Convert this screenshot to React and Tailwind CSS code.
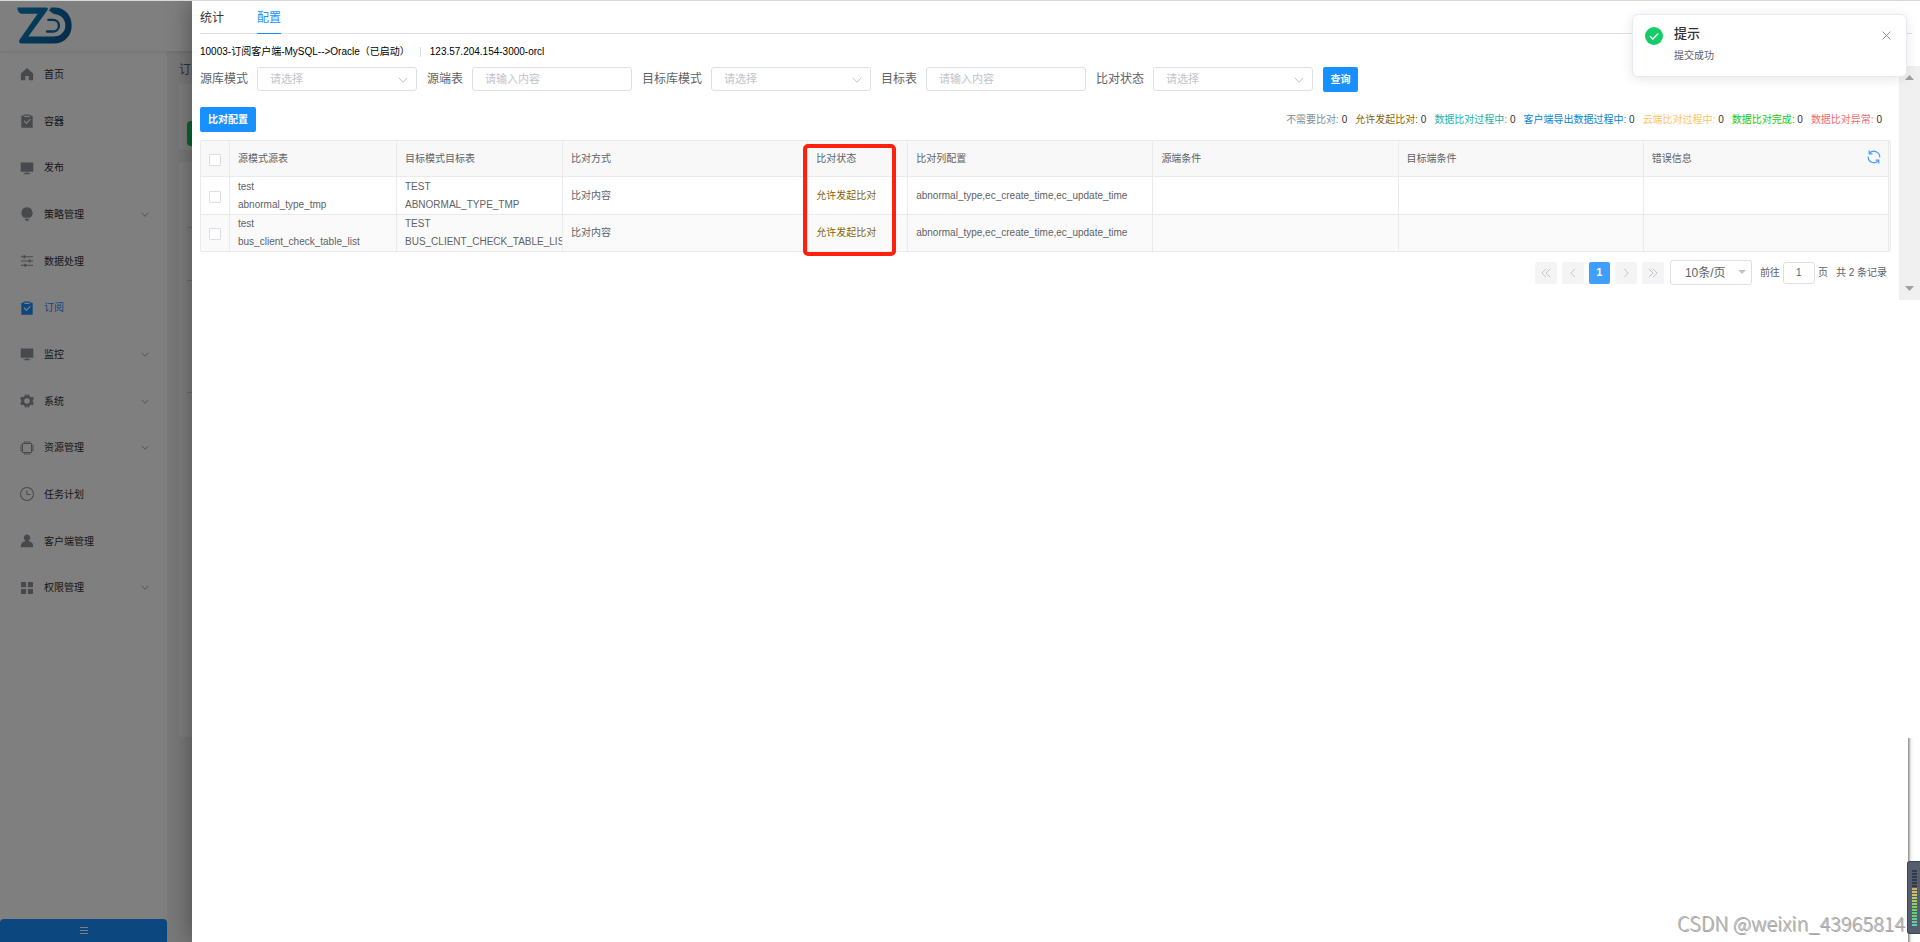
import React from "react";

const iconPaths = {
  home: <path d="M8 1.2 1 7.4V15h5v-4.6h4V15h5V7.4Z" />,
  claim: (
    <path
      fillRule="evenodd"
      d="M1.5 2H4V.8h1.2V2h5.6V.8H12V2h2.5v13.6h-13ZM5 .6h6v2.8H5ZM4 8l3.4 3.6 5-5.2-1-1-4 4.2L5 7Z"
    />
  ),
  platform: <path d="M.8 1.6h14.4v10.6H.8Zm5.4 11.6h3.6v.8h2v1.2H4.2V14h2Z" />,
  bulb: <path d="M8 .4a6.4 6.4 0 0 1 3.4 11.8H4.6A6.4 6.4 0 0 1 8 .4ZM5.4 13.4h5.2v1H9.8v1.2H6.2v-1.2h-.8Z" />,
  operation: (
    <path d="M1 2.6h3V1.4h2v1.2h9v1.2H6V5H4V3.8H1Zm0 4.8h9V6.2h2v1.2h3v1.2h-3v1.2h-2V8.6H1Zm0 4.8h4V11h2v1.2h8v1.2H7v1.2H5v-1.2H1Z" />
  ),
  tools: (
    <path
      fillRule="evenodd"
      d="M5.6.6h1.6l.4 1.4h.8L8.8.6h1.6l.6 2.2 1.6.9 2-.6 1.3 2.4-1.3 1.5v2l1.3 1.5-1.3 2.4-2-.6-1.6.9-.6 2.2H8.8L8.4 14h-.8l-.4 1.4H5.6L5 13.2l-1.6-.9-2 .6L.1 10.5 1.4 9V7L.1 5.5l1.3-2.4 2 .6L5 2.8ZM8 4.8a3.2 3.2 0 1 0 0 6.4 3.2 3.2 0 0 0 0-6.4Z"
    />
  ),
  cpu: (
    <path
      fillRule="evenodd"
      d="M5 0h1v2h1.5V0h1v2H10V0h1v2h1.5L14 3.5V5h2v1h-2v1.5h2v1h-2V10h2v1h-2v1.5L12.5 14H11v2h-1v-2H8.5v2h-1v-2H6v2H5v-2H3.5L2 12.5V11H0v-1h2V8.5H0v-1h2V6H0V5h2V3.5L3.5 2H5ZM3.4 3.4v9.2h9.2V3.4Z"
    />
  ),
  time: (
    <path
      fillRule="evenodd"
      d="M8 0a8 8 0 1 1 0 16A8 8 0 0 1 8 0Zm0 1.2a6.8 6.8 0 1 0 0 13.6A6.8 6.8 0 0 0 8 1.2ZM7.3 4h1.2v4h3.5v1.2H7.3Z"
    />
  ),
  custom: <path d="M8 .6a3.7 3.7 0 0 1 2 6.8l.2.8c3.2.4 5 2.8 5 6.8H.8c0-4 1.8-6.4 5-6.8l.2-.8A3.7 3.7 0 0 1 8 .6Z" />,
  menu: <path d="M1.2 1.2H7V7H1.2Zm7.8 0h5.8V7H9ZM1.2 9H7v5.8H1.2ZM9 9h5.8v5.8H9Z" />,
};

const navItems = [
  { label: "首页", icon: "home" },
  { label: "容器", icon: "claim" },
  { label: "发布", icon: "platform" },
  { label: "策略管理", icon: "bulb", sub: true },
  { label: "数据处理", icon: "operation" },
  { label: "订阅", icon: "claim", active: true },
  { label: "监控", icon: "platform", sub: true },
  { label: "系统", icon: "tools", sub: true },
  { label: "资源管理", icon: "cpu", sub: true },
  { label: "任务计划", icon: "time" },
  { label: "客户端管理", icon: "custom" },
  { label: "权限管理", icon: "menu", sub: true },
];

const filters = [
  { id: "src-schema", label: "源库模式", type: "select" },
  { id: "src-table", label: "源端表", type: "input" },
  { id: "dst-schema", label: "目标库模式", type: "select" },
  { id: "dst-table", label: "目标表", type: "input" },
  { id: "status", label: "比对状态", type: "select" },
];

const legend = [
  { label: "不需要比对:", color: "text-[#7f8c8d]" },
  { label: "允许发起比对:", color: "text-[#85640a]" },
  { label: "数据比对过程中:", color: "text-[#20b2aa]" },
  { label: "客户端导出数据过程中:", color: "text-[#0984d3]" },
  { label: "云端比对过程中:", color: "text-[#ffc266]" },
  { label: "数据比对完成:", color: "text-[#16c916]" },
  { label: "数据比对异常:", color: "text-[#f56c6c]" },
];

const rows = [
  { src: ["test", "abnormal_type_tmp"], dst: ["TEST", "ABNORMAL_TYPE_TMP"] },
  { src: ["test", "bus_client_check_table_list"], dst: ["TEST", "BUS_CLIENT_CHECK_TABLE_LIST"] },
];

function Chevron({ className }) {
  return (
    <svg viewBox="0 0 10 6" fill="none" stroke="currentColor" strokeWidth="1" className={className} aria-hidden="true">
      <path d="M.8.8 5 5.2 9.2.8" />
    </svg>
  );
}

function Logo() {
  return (
    <svg viewBox="50 20 168 116" className="h-[39px] w-14" fill="none" aria-hidden="true">
      <defs>
        <linearGradient id="logo" x1="50" y1="20" x2="215" y2="135" gradientUnits="userSpaceOnUse">
          <stop offset="0" stopColor="#0a84c4" />
          <stop offset="1" stopColor="#0a5690" />
        </linearGradient>
      </defs>
      <path d="M51 24h86q9 0 4 8L84 111h75c22 0 36-14 36-33 0-20-14-33-36-35l-13-10 6-9h10c31 0 52 23 52 54 0 31-21 54-54 54H64q-12 0-6-12l54-77H62q-10-3-11-18Z" fill="url(#logo)" />
      <path d="M144 61h13c25 0 25 35 0 35h-17" stroke="#0a6aa8" strokeWidth="7" strokeLinecap="round" />
    </svg>
  );
}

function Sidebar() {
  return (
    <aside className="flex w-[167px] shrink-0 flex-col justify-between bg-white">
      <nav className="flex h-[560px] flex-col">
        {navItems.map((item) => (
          <a
            key={item.label}
            href="#"
            className={`flex flex-1 items-center pl-5 pr-[18px] text-[10px] ${item.active ? "text-[#1890ff]" : "text-[#303133]"}`}
          >
            <svg
              viewBox="0 0 16 16"
              fill="currentColor"
              className={`mr-[10px] size-[14px] ${item.active ? "text-[#1890ff]" : "text-[#909399]"}`}
              aria-hidden="true"
            >
              {iconPaths[item.icon]}
            </svg>
            <span className="flex-1">{item.label}</span>
            {item.sub && <Chevron className="h-[5px] w-2 text-[#909399]" />}
          </a>
        ))}
      </nav>
      <button type="button" aria-label="折叠菜单" className="flex h-[23px] items-center justify-center rounded-t-sm bg-[#1890ff] text-white">
        <svg viewBox="0 0 8 7" className="h-[7px] w-2" stroke="currentColor" aria-hidden="true">
          <path d="M0 .5h8M0 3.5h8M0 6.5h8" />
        </svg>
      </button>
    </aside>
  );
}

function BackPage() {
  return (
    <div className="flex flex-1 flex-col">
      <header className="z-10 flex h-[50px] items-center pl-[17px] pb-[2px] bg-white shadow-[0_1px_4px_rgba(0,21,41,0.12)]">
        <Logo />
      </header>
      <div className="flex flex-1">
        <Sidebar />
        <main className="flex-1 bg-[#f3f3f4] pl-3 pt-[11px]">
          <h1 className="text-[12px] leading-4 text-[#606266]">订阅</h1>
          <div className="mt-[6px] rounded bg-white px-2 pt-[37px] pb-1">
            <div className="h-[25px] w-20 rounded-sm bg-[#13ce66]" />
          </div>
          <div className="mt-3 h-[575px] rounded bg-white pl-2 pt-[65px]">
            <div className="h-[53px] border-t border-[#dcdfe6]" />
            <div className="h-[113px] border-y border-[#dcdfe6]" />
          </div>
        </main>
      </div>
    </div>
  );
}

function FilterField({ field }) {
  const box = "block h-6 w-full rounded-[3px] border border-[#dcdfe6] bg-white pl-3 text-[11px] leading-5";
  return (
    <div className="flex items-center gap-[9px]">
      <label htmlFor={field.id} className="text-[12px] leading-6 text-[#606266]">
        {field.label}
      </label>
      <div className="relative w-40">
        {field.type === "select" ? (
          <>
            <select id={field.id} defaultValue="" className={`${box} appearance-none text-[#c0c4cc]`}>
              <option value="">请选择</option>
            </select>
            <Chevron className="pointer-events-none absolute right-[9px] top-[10px] h-[6px] w-[10px] text-[#c0c4cc]" />
          </>
        ) : (
          <input id={field.id} type="text" placeholder="请输入内容" className={`${box} placeholder:text-[#c0c4cc]`} />
        )}
      </div>
    </div>
  );
}

function CheckBox({ label }) {
  return (
    <input
      type="checkbox"
      aria-label={label}
      className="mx-auto mt-[2px] block size-3 appearance-none rounded-[1px] border border-[#dcdfe6] bg-white"
    />
  );
}

function DataTable() {
  const th = "border-b border-r border-[#e8eaec] pl-2 text-left font-normal";
  const td = "overflow-hidden whitespace-nowrap border-b border-r border-[#e8eaec] pl-2 leading-[18px]";
  return (
    <div className="relative mt-2">
      <div className="overflow-hidden rounded-[3px] border border-b-0 border-[#e8eaec] bg-[#f8f8f9] pr-[1px]">
        <table className="w-full table-fixed border-separate border-spacing-0 text-[10px] text-[#606266]">
          <colgroup>
            <col className="w-[29px]" />
            <col className="w-[167px]" />
            <col className="w-[166px]" />
            <col />
            <col className="w-[100px]" />
            <col />
            <col />
            <col />
            <col />
          </colgroup>
          <thead>
            <tr className="h-9 bg-[#f8f8f9]">
              <th className="border-b border-r border-[#e8eaec]">
                <CheckBox label="全选" />
              </th>
              {["源模式源表", "目标模式目标表", "比对方式", "比对状态", "比对列配置", "源端条件", "目标端条件"].map((name) => (
                <th key={name} className={th}>
                  {name}
                </th>
              ))}
              <th className={th}>
                <div className="flex items-center justify-between pr-[7px]">
                  错误信息
                  <button type="button" aria-label="刷新" className="pb-1 text-[#409eff]">
                    <svg viewBox="0 0 14 14" fill="none" stroke="currentColor" strokeWidth="1.2" className="size-[14px]" aria-hidden="true">
                      <path d="M2.6 3.4A5.7 5.7 0 0 1 12.7 7.4M11.4 10.6A5.7 5.7 0 0 1 1.3 6.6" />
                      <path d="M2.2.6v3.2h3.2M11.800 13.400v-3.200H8.600" />
                    </svg>
                  </button>
                </div>
              </th>
            </tr>
          </thead>
          <tbody>
            {rows.map((row, i) => (
              <tr key={row.src[1]} className={i % 2 ? "h-[37px] bg-[#fafafa]" : "h-[38px] bg-white"}>
                <td className="border-b border-r border-[#e8eaec]">
                  <CheckBox label={row.src[1]} />
                </td>
                <td className={td}>
                  {row.src[0]}
                  <br />
                  {row.src[1]}
                </td>
                <td className={td}>
                  {row.dst[0]}
                  <br />
                  {row.dst[1]}
                </td>
                <td className={td}>比对内容</td>
                <td className={`${td} text-[#85640a]`}>允许发起比对</td>
                <td className={td}>abnormal_type,ec_create_time,ec_update_time</td>
                <td className={td} />
                <td className={td} />
                <td className={td} />
              </tr>
            ))}
          </tbody>
        </table>
      </div>
      <Highlight />
    </div>
  );
}

/* Marker frame drawn over the status column; the column tracks mirror the table's. */
function Highlight() {
  return (
    <div className="pointer-events-none absolute inset-x-0 -bottom-1 top-1 grid grid-cols-[29px_167px_166px_1fr_100px_1fr_1fr_1fr_1fr]">
      <div className="col-start-5 -ml-[5px] mr-3 rounded-[5px] border-4 border-[#ff2010]" />
    </div>
  );
}

function PageButton({ label, children }) {
  return (
    <button type="button" aria-label={label} className="flex h-[22px] w-[22px] items-center justify-center rounded-[2px] bg-[#f4f4f5] text-[#c0c4cc]">
      <svg viewBox="0 0 10 10" fill="none" stroke="currentColor" strokeWidth="1" className="size-[10px]" aria-hidden="true">
        {children}
      </svg>
    </button>
  );
}

function Pagination() {
  return (
    <div className="mt-2 flex items-center justify-end pr-1 text-[10px] text-[#606266]">
      <div className="flex gap-[5px]">
        <PageButton label="首页">
          <path d="M5 .8.8 5 5 9.2M9.2.8 5 5l4.2 4.2" />
        </PageButton>
        <PageButton label="上一页">
          <path d="M7 .8 2.8 5 7 9.2" />
        </PageButton>
        <button type="button" className="h-[22px] w-[21px] rounded-[2px] bg-[#409eff] text-[11px] font-bold text-white">
          1
        </button>
        <PageButton label="下一页">
          <path d="M3 .8 7.2 5 3 9.2" />
        </PageButton>
        <PageButton label="末页">
          <path d="M.8.8 5 5 .8 9.2M5 .8 9.2 5 5 9.2" />
        </PageButton>
      </div>
      <div className="relative ml-[6px]">
        <select aria-label="每页条数" className="block h-[25px] w-[82px] appearance-none rounded-[3px] border border-[#dcdfe6] bg-white pl-[14px] text-[12px] leading-5 text-[#606266]">
          <option>10条/页</option>
        </select>
        <svg viewBox="0 0 8 4" className="pointer-events-none absolute right-[6px] top-[10px] h-1 w-2 fill-[#c0c4cc]" aria-hidden="true">
          <path d="M0 0h8L4 4Z" />
        </svg>
      </div>
      <label className="ml-2 flex items-center gap-[3px]">
        前往
        <input type="text" defaultValue="1" className="h-[22px] w-8 rounded-[3px] border border-[#dcdfe6] bg-white text-center text-[#606266]" />
        页
      </label>
      <span className="ml-2">共 2 条记录</span>
    </div>
  );
}

function ScrollTrack() {
  return (
    <div className="flex w-[21px] flex-col items-center justify-between bg-[#f0f0f0] py-[9px]" aria-hidden="true">
      <svg viewBox="0 0 9 5" className="h-[5px] w-[9px] fill-[#a0a0a0]">
        <path d="M0 5h9L4.5 0Z" />
      </svg>
      <svg viewBox="0 0 9 5" className="h-[5px] w-[9px] fill-[#a0a0a0]">
        <path d="M0 0h9L4.5 5Z" />
      </svg>
    </div>
  );
}

function Drawer() {
  const primary = "h-[25px] rounded-[2px] bg-[#1890ff] text-[10px] font-bold text-white";
  const tab = "-mb-px border-b pt-px";
  return (
    <section className="absolute inset-y-0 right-0 w-[90%] bg-white shadow-[0_0_24px_rgba(0,0,0,0.4)]">
      <div className="mx-2 flex h-[33px] gap-[33px] border-b border-[#dfe1e8] text-[12px]" role="tablist">
        <button type="button" role="tab" aria-selected="false" className={`${tab} border-transparent text-[#303133]`}>
          统计
        </button>
        <button type="button" role="tab" aria-selected="true" className={`${tab} border-[#1890ff] text-[#1890ff]`}>
          配置
        </button>
      </div>
      <div className="flex h-8 items-center pl-2 pt-[3px] text-[10px] text-black">
        <span>10003-订阅客户端-MySQL--&gt;Oracle（已启动）</span>
        <span className="ml-[10px] mr-[9px] h-[10px] w-px bg-[#dcdfe6]" />
        <span>123.57.204.154-3000-orcl</span>
      </div>
      <div className="flex">
        <div className="min-w-0 flex-1 pb-[15px] pl-2 pr-2">
          <form className="flex items-start gap-[10px] pt-px" onSubmit={(e) => e.preventDefault()}>
            {filters.map((f) => (
              <FilterField key={f.id} field={f} />
            ))}
            <button type="submit" className={`${primary} w-[35px]`}>
              查询
            </button>
          </form>
          <div className="mt-[15px] flex items-center justify-between">
            <button type="button" className={`${primary} w-14`}>
              比对配置
            </button>
            <ul className="flex gap-2 pr-[9px] text-[10px] text-[#303133]">
              {legend.map((item) => (
                <li key={item.label}>
                  <span className={item.color}>{item.label}</span> 0
                </li>
              ))}
            </ul>
          </div>
          <DataTable />
          <Pagination />
        </div>
        <ScrollTrack />
      </div>
    </section>
  );
}

function Notification() {
  return (
    <div role="alert" className="absolute right-[13px] top-[13px] flex h-[63px] w-[275px] items-start rounded-md border border-[#e6ebf5] bg-white pl-3 pr-[15px] pt-[11px] shadow-[0_2px_12px_rgba(0,0,0,0.1)]">
      <svg viewBox="0 0 18 18" className="mt-px size-[18px]" aria-hidden="true">
        <circle cx="9" cy="9" r="9" fill="#13ce66" />
        <path d="m5 9.2 2.9 2.9L13.2 6.6" fill="none" stroke="#fff" strokeWidth="1.4" />
      </svg>
      <div className="ml-[11px] flex-1">
        <h2 className="text-[13px] leading-4 text-[#303133] font-medium">提示</h2>
        <p className="mt-[6px] text-[10px] leading-4 text-[#606266]">提交成功</p>
      </div>
      <button type="button" aria-label="关闭" className="mt-[5px] text-[#909399]">
        <svg viewBox="0 0 9 9" className="size-[9px]" stroke="currentColor" aria-hidden="true">
          <path d="m.5.5 8 8m0-8-8 8" />
        </svg>
      </button>
    </div>
  );
}

function MeterWidget() {
  const bars = Array.from({ length: 19 }, (_, i) => i);
  const color = (i) => (i < 6 ? "#343a47" : `hsl(${44 + (i - 6) * 10} 50% 60%)`);
  return (
    <div className="absolute bottom-0 right-0 h-[204px] w-3 bg-linear-to-r from-[#8a8a8a] from-0% via-[#f2f2f2] via-25% to-white to-50%" aria-hidden="true">
      <div className="absolute bottom-2 right-0 h-[73px] w-[13px] rounded-l-[3px] border border-r-0 border-[#3e4452] bg-[#555d6e]">
        <svg viewBox="0 0 5 57" className="ml-1 mt-2 h-[57px] w-[5px]">
          {bars.map((i) => (
            <rect key={i} x="0" y={i * 3} width="5" height="2" fill={color(i)} />
          ))}
        </svg>
      </div>
    </div>
  );
}

export default function App() {
  return (
    <div className="relative flex min-h-screen flex-col overflow-hidden border-t border-[#d8d8d8] bg-white font-['Liberation_Sans','Noto_Sans_CJK_SC',sans-serif]">
      <BackPage />
      <div className="absolute inset-0 z-20 bg-black/50" />
      <div className="absolute inset-0 z-30">
        <Drawer />
        <Notification />
        <MeterWidget />
        <p className="absolute bottom-[7px] right-[15px] font-['Noto_Sans_CJK_SC',sans-serif] text-[20px] font-light leading-6 text-[#b0b0b0] [text-shadow:1px_1px_0_#a8a8a8]">
          CSDN @weixin_43965814
        </p>
      </div>
    </div>
  );
}
